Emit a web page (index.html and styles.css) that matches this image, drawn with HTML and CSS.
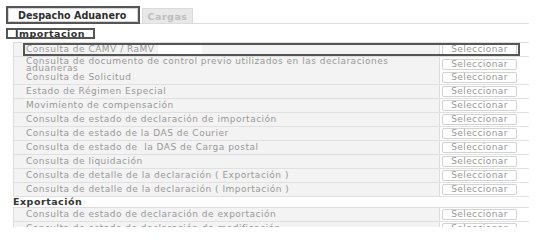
FILE: index.html
```html
<!DOCTYPE html>
<html lang="es">
<head>
    <meta charset="UTF-8">
    <title>Despacho Aduanero</title>
    <link rel="stylesheet" href="styles.css">
</head>
<body>
    <div class="page">

        <div class="tabs">
            <div class="tab tab-active">Despacho Aduanero</div>
            <div class="tab tab-off">Cargas</div>
        </div>

        <div class="section-title section-boxed">Importacion</div>

        <div class="menu">
            <div class="menu-row menu-marked">
                <div class="menu-name">Consulta de CAMV / RaMV<span class="blank"></span></div>
                <div class="menu-action"><button class="select-btn">Seleccionar</button></div>
            </div>
            <div class="menu-row">
                <div class="menu-name menu-name-two">Consulta de documento de control previo utilizados en las declaraciones<br>aduaneras</div>
                <div class="menu-action"><button class="select-btn">Seleccionar</button></div>
            </div>
            <div class="menu-row">
                <div class="menu-name">Consulta de Solicitud</div>
                <div class="menu-action"><button class="select-btn">Seleccionar</button></div>
            </div>
            <div class="menu-row">
                <div class="menu-name">Estado de Régimen Especial</div>
                <div class="menu-action"><button class="select-btn">Seleccionar</button></div>
            </div>
            <div class="menu-row">
                <div class="menu-name">Movimiento de compensación</div>
                <div class="menu-action"><button class="select-btn">Seleccionar</button></div>
            </div>
            <div class="menu-row">
                <div class="menu-name">Consulta de estado de declaración de importación</div>
                <div class="menu-action"><button class="select-btn">Seleccionar</button></div>
            </div>
            <div class="menu-row">
                <div class="menu-name">Consulta de estado de la DAS de Courier</div>
                <div class="menu-action"><button class="select-btn">Seleccionar</button></div>
            </div>
            <div class="menu-row">
                <div class="menu-name">Consulta de estado de&nbsp; la DAS de Carga postal</div>
                <div class="menu-action"><button class="select-btn">Seleccionar</button></div>
            </div>
            <div class="menu-row">
                <div class="menu-name">Consulta de liquidación</div>
                <div class="menu-action"><button class="select-btn">Seleccionar</button></div>
            </div>
            <div class="menu-row">
                <div class="menu-name">Consulta de detalle de la declaración ( Exportación )</div>
                <div class="menu-action"><button class="select-btn">Seleccionar</button></div>
            </div>
            <div class="menu-row">
                <div class="menu-name">Consulta de detalle de la declaración ( Importación )</div>
                <div class="menu-action"><button class="select-btn">Seleccionar</button></div>
            </div>
        </div>

        <div class="section-title">Exportación</div>

        <div class="menu">
            <div class="menu-row">
                <div class="menu-name">Consulta de estado de declaración de exportación</div>
                <div class="menu-action"><button class="select-btn">Seleccionar</button></div>
            </div>
            <div class="menu-row">
                <div class="menu-name">Consulta de estado de declaración de modificación</div>
                <div class="menu-action"><button class="select-btn">Seleccionar</button></div>
            </div>
        </div>

    </div>
</body>
</html>
```

FILE: styles.css
```css
* {
    margin: 0;
    padding: 0;
    box-sizing: border-box;
}

body {
    background-color: #fff;
    font-family: "DejaVu Sans", Verdana, sans-serif;
    font-size: 9px;
    letter-spacing: 0.5px;
    color: #989898;
}

.page {
    height: 227px;
    overflow: hidden;
    padding-top: 6px;
}

/* tabs */

.tabs {
    display: flex;
    align-items: flex-end;
    width: 523px;
    height: 18px;
    margin-left: 6px;
    border-bottom: 1px solid #dcdcdc;
}

.tab {
    display: flex;
    align-items: center;
    font-weight: 700;
    white-space: nowrap;
    flex-shrink: 0;
}

.tab-active {
    width: 134px;
    height: 18px;
    margin-bottom: -1px;
    padding-left: 10px;
    font-size: 9.6px;
    letter-spacing: 0;
    background-color: #fff;
    color: #2f2f2f;
    border: 2px solid #555;
    box-shadow: inset 0 0 0 1px #d6d6d6;
}

.tab-off {
    height: 15px;
    width: 51px;
    margin-left: 2px;
    justify-content: center;
    font-size: 9.5px;
    background-color: #e8e8e8;
    color: #bdbdbd;
    border: 1px solid #dadada;
    border-bottom: none;
}

/* section labels */

.section-title {
    height: 10px;
    margin-left: 13px;
    line-height: 10px;
    font-size: 9.5px;
    font-weight: 700;
    color: #333;
}

.section-boxed {
    width: 89px;
    height: 11px;
    margin: 4px 0 3px 6px;
    padding-left: 7px;
    line-height: 8px;
    border: 2px solid #555;
}

/* menu table */

.menu {
    width: 516px;
    margin-left: 13px;
    border-top: 1px solid #dcdcdc;
    border-left: 1px solid #dcdcdc;
}

.menu-row {
    display: grid;
    grid-template-columns: 425px 1fr;
    height: 14px;
    border-bottom: 1px solid #e0e0e0;
    position: relative;
}

.menu-name {
    padding-left: 12px;
    background-color: #f3f3f3;
    line-height: 13px;
    white-space: nowrap;
}

.menu-name-two {
    padding-top: 1px;
    line-height: 7px;
}

.menu-action {
    display: flex;
    align-items: center;
    padding-left: 2px;
    border-left: 1px solid #dcdcdc;
    background-color: #fff;
}

.select-btn {
    width: 75px;
    height: 11px;
    font-family: inherit;
    font-size: 9px;
    letter-spacing: 0.4px;
    line-height: 9px;
    color: #989898;
    background-color: #fff;
    border: 1px solid #d2d2d2;
    border-radius: 2px;
}

.blank {
    display: inline-block;
    width: 44px;
    height: 10px;
    margin-left: 3px;
    vertical-align: middle;
    background-color: #fff;
}

.menu-marked::after {
    content: "";
    position: absolute;
    top: 0;
    left: 9px;
    right: 9px;
    bottom: 0;
    border: 2px solid #555;
}
```
